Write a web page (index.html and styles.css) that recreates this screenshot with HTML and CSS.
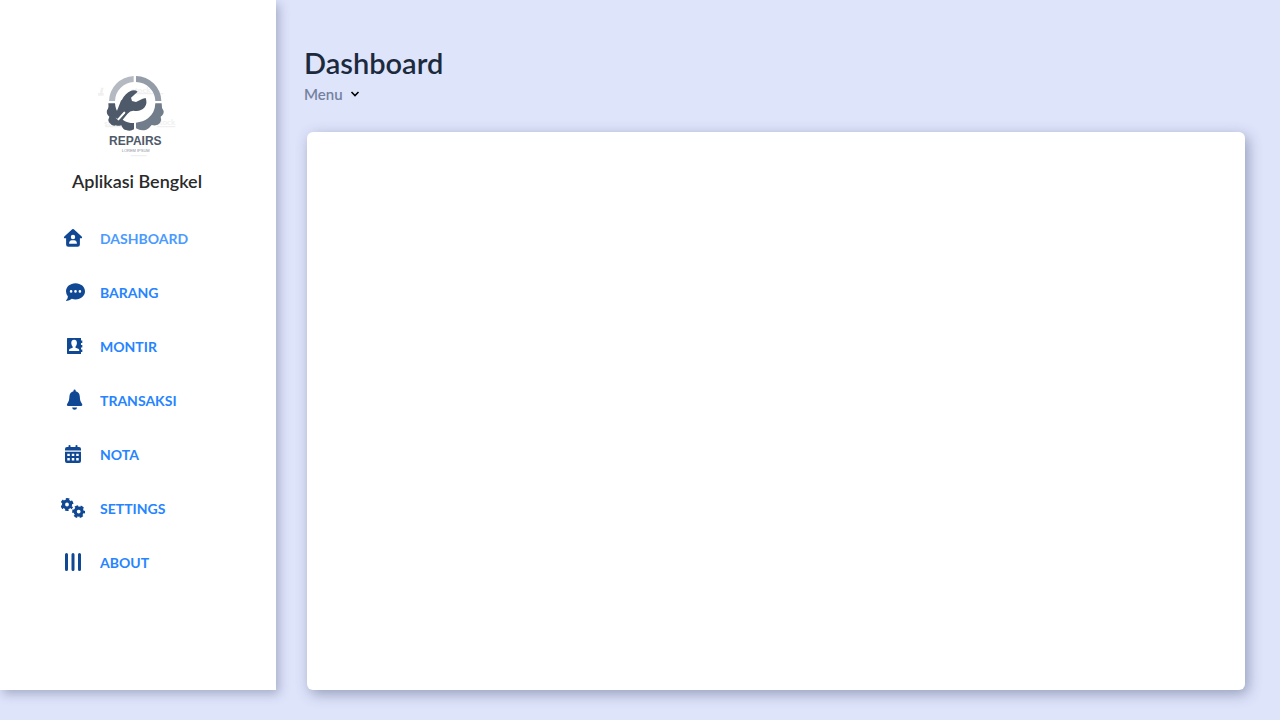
FILE: index.html
```html
<!DOCTYPE html>
<html lang="id">
<head>
<meta charset="utf-8">
<meta name="viewport" content="width=device-width, initial-scale=1">
<title>Aplikasi Bengkel</title>
<link rel="stylesheet" href="styles.css">
</head>
<body>
<aside class="sidebar">
  <svg class="logo" viewBox="0 0 285 300" role="img" aria-label="Repairs">
    <g class="logo-haze">
      <text x="124" y="84">stock</text>
      <text x="43" y="182">stock</text>
      <text x="198" y="180">stock</text>
      <path d="M33 68h8l-4 16h4v8H24v-8h6z"/>
      <path d="M138 86h82M46 185h75M200 185h56M122 272h48" fill="none" stroke="#f0f0f0" stroke-width="4"/>
    </g>
    <path fill="#b5bac2" d="M57 108A78 76 0 0 1 131 33V51A59 58 0 0 0 75 108Z"/>
    <path fill="#949da7" d="M138 33A78 76 0 0 1 214 108H196A59 58 0 0 0 138 51Z"/>
    <path fill="#4e5a69" d="M55 115H75Q76 133 86 146L79 153Q75 160 82 162Q87 164 92 158L105 145L101 140L89 152Q86 154 86 149L97 136Q107 124 94 111L96 104Q106 84 123 77Q136 74 143 80L123 98L126 108L138 111L158 101L167 99Q173 114 164 127Q150 142 130 137Q120 137 112 147L98 164Q111 174 132 174V193Q121 200 108 195Q99 195 94 181Q83 184 78 181Q66 185 57 172Q53 163 58 155Q48 147 51 136Q57 130 55 115Z"/>
    <path fill="#4e5a69" d="M94 104L113 130L84 163L74 155Z"/>
    <path fill="#717d8a" d="M196 115H215Q214 129 221 138Q222 149 212 155Q216 165 210 174Q202 184 185 180Q178 190 169 194Q153 199 138 190V173Q159 171 174 160Q195 144 196 115Z"/>
    <path fill="none" stroke="#fff" stroke-width="6" stroke-linecap="round" d="M85 163L103 143"/>
    <text class="logo-name" x="136" y="241">REPAIRS</text>
    <text class="logo-sub" x="137" y="261">LOREM IPSUM</text>
  </svg>
  <h2 class="brand">Aplikasi Bengkel</h2>
  <nav class="menu">
    <a class="item active" href="#dashboard">
      <svg class="icon" viewBox="0 0 24 24"><path fill-rule="evenodd" d="M11.2 3.3a1.2 1.2 0 0 1 1.6 0L20.7 10.4Q21.5 11.3 20.8 12.3H18.9V18.6Q18.9 20.8 16.7 20.8H7.3Q5.1 20.8 5.1 18.6V12.3H3.3Q2.4 11.3 3.3 10.4ZM12 8.8a2.2 2.2 0 1 0 0 4.4a2.2 2.2 0 0 0 0-4.4ZM8.1 17.8H15.9Q15.9 14.2 13.2 14.2H10.8Q8.1 14.2 8.1 17.8Z"/></svg>
      <span>DASHBOARD</span></a>
    <a class="item" href="#barang">
      <svg class="icon icon-shift" viewBox="0 0 24 24"><path fill-rule="evenodd" d="M11.5 3.2C16.9 3.2 21 6.8 21 11.3S16.9 19.4 11.5 19.4Q9.7 19.4 7.9 18.8Q5.5 20.9 2.3 21Q1.8 20.7 2.2 20.2Q3.9 18.5 3.9 16.5Q2 14.3 2 11.3C2 6.8 6.1 3.2 11.5 3.2ZM7.1 10.1a1.3 1.3 0 1 0 0 2.6a1.3 1.3 0 0 0 0-2.6ZM11.5 10.1a1.3 1.3 0 1 0 0 2.6a1.3 1.3 0 0 0 0-2.6ZM15.9 10.1a1.3 1.3 0 1 0 0 2.6a1.3 1.3 0 0 0 0-2.6Z"/></svg>
      <span>BARANG</span></a>
    <a class="item" href="#montir">
      <svg class="icon icon-shift" viewBox="0 0 24 24"><path fill-rule="evenodd" d="M3.5 4H17V6.5H18.3V9H17V11H18.3V13.5H17V15.5H18.3V18H17V20H3.5Q3 20 3 19.3V4.7Q3 4 3.5 4ZM10.1 5.8C8 5.8 7.1 7.4 7.3 9.5Q7.5 11.6 8.7 12.7V13.7L5.9 14.8Q4.9 15.3 4.9 17H15.3Q15.3 15.3 14.3 14.8L11.5 13.7V12.7Q12.7 11.6 12.9 9.5C13.1 7.4 12.2 5.8 10.1 5.8Z"/></svg>
      <span>MONTIR</span></a>
    <a class="item" href="#transaksi">
      <svg class="icon icon-shift" viewBox="0 0 24 24"><path d="M10.6 1.5Q11.7 1.5 11.7 2.8V3.3Q15.5 4.3 15.8 8.5C16 12.4 16.5 13.5 17.8 15.4Q18.5 16.5 18.3 17.3Q18 18 17 18H4.2Q3.2 18 2.9 17.3Q2.7 16.5 3.4 15.4C4.7 13.5 5.2 12.4 5.4 8.5Q5.7 4.3 9.5 3.3V2.8Q9.5 1.5 10.6 1.5ZM8.1 19.4H13.1Q12.8 21.8 10.6 21.8T8.1 19.4Z"/></svg>
      <span>TRANSAKSI</span></a>
    <a class="item" href="#nota">
      <svg class="icon" viewBox="0 0 24 24"><path fill-rule="evenodd" d="M7.5 3.8Q7.5 3 8.5 3T9.5 3.8V5H14.5V3.8Q14.5 3 15.5 3T16.5 3.8V5H18Q20 5 20 7V8.5H4V7Q4 5 6 5H7.5ZM4 9.7H20V19Q20 21 18 21H6Q4 21 4 19ZM6.3 11.7V14H8.8V11.7ZM10.8 11.7V14H13.3V11.7ZM15.2 11.7V14H17.7V11.7ZM6.3 16V18.4H8.8V16ZM10.8 16V18.4H13.3V16ZM15.2 16V18.4H17.7V16Z"/></svg>
      <span>NOTA</span></a>
    <a class="item" href="#settings">
      <svg class="icon" viewBox="0 0 24 24">
        <g fill="none" stroke="#114893">
          <circle cx="6" cy="8.5" r="3.5" stroke-width="3.2"/>
          <circle cx="6" cy="8.5" r="5.3" stroke-width="2.4" stroke-dasharray="3.2 2.35" stroke-dashoffset="1.6" transform="rotate(30 6 8.5)"/>
          <circle cx="17.7" cy="15.6" r="3.5" stroke-width="3.2"/>
          <circle cx="17.7" cy="15.6" r="5.3" stroke-width="2.4" stroke-dasharray="3.2 2.35" stroke-dashoffset="1.6"/>
        </g></svg>
      <span>SETTINGS</span></a>
    <a class="item" href="#about">
      <svg class="icon" viewBox="0 0 24 24"><path fill="none" stroke="#114893" stroke-width="3" stroke-linecap="round" d="M5.5 4.5V19.5M12 4.5V19.5M18.5 4.5V19.5"/></svg>
      <span>ABOUT</span></a>
  </nav>
</aside>
<main class="main">
  <header class="heading">
    <h1 class="title">Dashboard</h1>
    <button class="dropdown" type="button">Menu
      <svg class="chevron" viewBox="0 0 10 6"><path d="M1.5 1L5 4.5L8.5 1"/></svg>
    </button>
  </header>
  <section class="panel" aria-label="Dashboard"></section>
</main>
</body>
</html>
```
FILE: styles.css
```css
* {
  box-sizing: border-box;
}

body {
  display: flex;
  min-height: 100vh;
  margin: 0;
  padding-bottom: 30px;
  background: #dee4fa;
  font-family: Lato, "Open Sans", sans-serif;
}

.sidebar {
  display: flex;
  flex: 0 0 276px;
  flex-direction: column;
  align-items: center;
  padding: 65px 2px 0 0;
  background: #fff;
  box-shadow: 3px 4px 10px rgba(60, 70, 110, 0.35);
}

.logo {
  width: 95px;
  height: 100px;
}

.logo-haze {
  fill: #f0f0f0;
  font: bold 24px Lato, sans-serif;
}

.logo-name {
  fill: #4e5a69;
  font: bold 36px "Liberation Sans", sans-serif;
  text-anchor: middle;
}

.logo-sub {
  fill: #8a929c;
  font: 12px "Liberation Sans", sans-serif;
  text-anchor: middle;
}

.brand {
  margin: 4px 0 18px;
  color: #2a2a2a;
  font-size: 18px;
  font-weight: 600;
  line-height: 24px;
}

.menu {
  align-self: stretch;
  padding-left: 61px;
}

.item {
  display: flex;
  align-items: center;
  gap: 15px;
  height: 54px;
  color: #2684ff;
  font-size: 14px;
  font-weight: 700;
  text-decoration: none;
}

.item.active {
  color: #4b9aff;
}

.icon {
  flex: none;
  width: 24px;
  height: 24px;
  fill: #114893;
}

.icon-shift {
  margin: 0 -3px 0 3px;
}

.main {
  display: flex;
  flex: 1;
  flex-direction: column;
  padding: 44px 35px 0 28px;
}

.heading {
  display: flex;
  flex-direction: column;
  align-items: flex-start;
  gap: 2px;
  margin-bottom: 28px;
}

.title {
  margin: 0;
  color: #1c2a3e;
  font-size: 29px;
  font-weight: 600;
  line-height: 38px;
}

.dropdown {
  display: flex;
  align-items: center;
  gap: 7px;
  padding: 0;
  border: 0;
  background: none;
  color: #74819f;
  font: 600 15px/20px Lato, sans-serif;
}

.chevron {
  width: 10px;
  height: 6px;
  fill: none;
  stroke: #000;
  stroke-width: 1.6;
}

.panel {
  flex: 1;
  margin-left: 3px;
  border-radius: 6px;
  background: #fff;
  box-shadow: 3px 4px 14px rgba(60, 70, 110, 0.45);
}
```
